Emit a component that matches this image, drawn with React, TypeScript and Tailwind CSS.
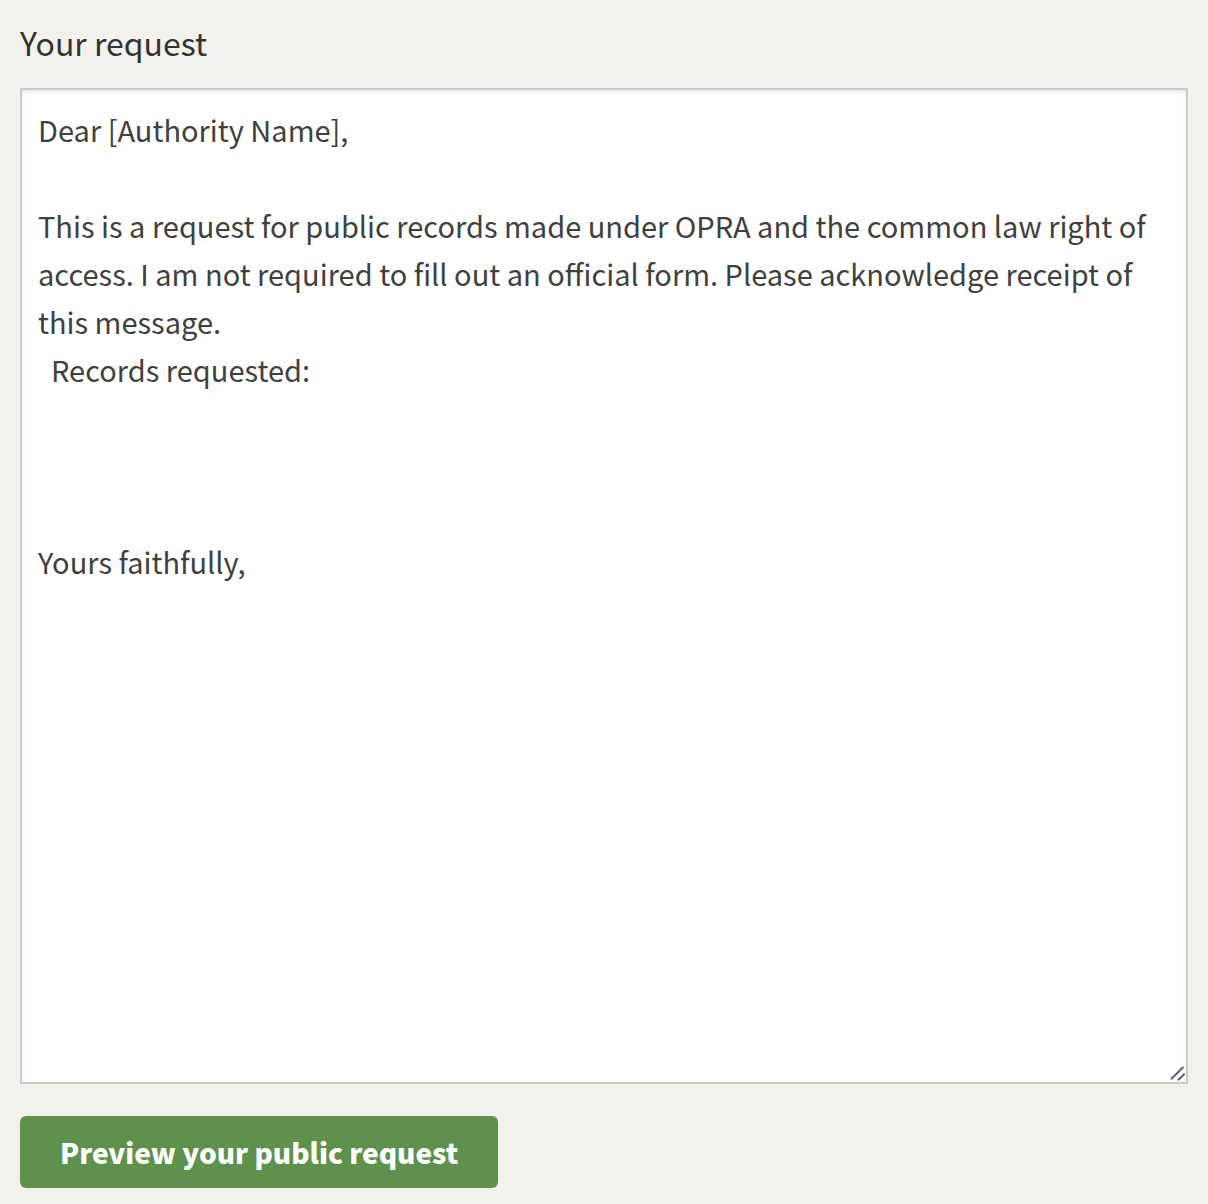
import React from "react";

const initialMessage = `Dear [Authority Name],

This is a request for public records made under OPRA and the common law right of access. I am not required to fill out an official form. Please acknowledge receipt of this message.
\u00a0 Records requested:



Yours faithfully,
`;

function ResizeGrip() {
  return (
    <svg
      viewBox="0 0 16 16"
      aria-hidden="true"
      className="pointer-events-none absolute right-0.5 bottom-0.5 size-4 text-[#606060]"
    >
      <path
        d="M1 13.2 13.4 1M8 14.2 14.6 7.8"
        fill="none"
        stroke="currentColor"
        strokeWidth="2"
      />
    </svg>
  );
}

export default function App() {
  return (
    <main className="min-h-screen bg-[#f2f1eb] px-5 pt-[18px] pb-4 font-['Noto_Sans_CJK_SC',sans-serif] text-[#333333]">
      <form className="flex flex-col items-start">
        <label htmlFor="request-body" className="text-[32px] leading-[48px]">
          Your request
        </label>
        <div className="relative mt-[22px] w-full">
          <textarea
            id="request-body"
            defaultValue={initialMessage}
            spellCheck={false}
            className="block h-[996px] w-full resize-none border-2 border-[#cbcbcb] bg-white px-4 py-[15px] text-[29px] leading-[48px] text-[#404040] shadow-[inset_0_2px_4px_rgba(0,0,0,0.1)] outline-none"
          />
          <ResizeGrip />
        </div>
        <button
          type="button"
          className="mt-8 rounded-[6px] bg-[#5e924c] px-10 text-[28px] leading-[72px] font-black text-white"
        >
          Preview your public request
        </button>
      </form>
    </main>
  );
}
